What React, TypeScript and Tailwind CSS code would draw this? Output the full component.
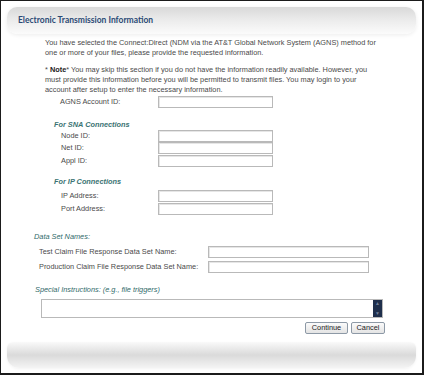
import React from "react";

const body = "font-['Liberation_Sans',Arial,sans-serif] text-[7.35px] text-[#4a4a4a]";

function Input({ w = "w-[115px]" }: { w?: string }) {
  return (
    <div
      className={`${w} h-[12px] bg-white border border-[#b9b9b9] shadow-[inset_1px_1px_0_#e6e6e6]`}
    />
  );
}

function Row({ label, labelMl, inputLeft, w }: { label: string; labelMl: string; inputLeft: string; w?: string }) {
  return (
    <div className="flex items-center h-[12.5px]">
      <div className={`${labelMl} ${inputLeft} shrink-0 leading-[12px]`}>{label}</div>
      <Input w={w} />
    </div>
  );
}

export default function App() {
  return (
    <div
      className={`w-[424px] h-[375px] bg-white border-l border-t border-r-2 border-b-2 border-[#1b1b1b] flex flex-col ${body}`}
    >
      {/* header */}
      <div className="mt-[6px] mx-[6px] h-[27px] rounded-[10px] bg-gradient-to-b from-[#d9d9d9] via-[#ececec] to-[#fbfbfb] shadow-[0_1px_4px_rgba(0,0,0,0.08)] flex items-center pl-[11px]">
        <span className="font-['Lato',sans-serif] font-bold text-[8.5px] text-[#2b4a75]">
          Electronic Transmission Information
        </span>
      </div>

      <div className="ml-[44px] mt-[4px] leading-[10px]">
        <div className="whitespace-nowrap">
          You have selected the Connect:Direct (NDM via the AT&amp;T Global Network System (AGNS) method for
        </div>
        <div className="whitespace-nowrap">one or more of your files, please provide the requested information.</div>
      </div>

      <div className="ml-[44px] mt-[7px] leading-[10px]">
        <div className="whitespace-nowrap">
          * <span className="font-bold text-[#222]">Note</span>* You may skip this section if you do not have the
          information readily available. However, you
        </div>
        <div className="whitespace-nowrap">
          must provide this information before you will be permitted to transmit files. You may login to your
        </div>
        <div className="whitespace-nowrap">account after setup to enter the necessary information.</div>
      </div>

      <div className="mt-[1px]">
        <Row label="AGNS Account ID:" labelMl="ml-[59px]" inputLeft="w-[98px]" />
      </div>

      <div className="ml-[53px] mt-[11px] leading-[10px] italic font-bold text-[#3b7373]">For SNA Connections</div>
      <div className="flex flex-col">
        <Row label="Node ID:" labelMl="ml-[60px]" inputLeft="w-[97px]" />
        <Row label="Net ID:" labelMl="ml-[60px]" inputLeft="w-[97px]" />
        <Row label="Appl ID:" labelMl="ml-[60px]" inputLeft="w-[97px]" />
      </div>

      <div className="ml-[53px] mt-[10px] leading-[10px] italic font-bold text-[#3b7373]">For IP Connections</div>
      <div className="flex flex-col mt-[3px]">
        <Row label="IP Address:" labelMl="ml-[60px]" inputLeft="w-[97px]" />
        <Row label="Port Address:" labelMl="ml-[60px]" inputLeft="w-[97px]" />
      </div>

      <div className="ml-[33px] mt-[17px] leading-[10px] italic text-[#2f6a6a]">Data Set Names:</div>
      <div className="flex flex-col mt-[4px] gap-[2px]">
        <Row
          label="Test Claim File Response Data Set Name:"
          labelMl="ml-[38px]"
          inputLeft="w-[169px]"
          w="w-[161px]"
        />
        <Row
          label="Production Claim File Response Data Set Name:"
          labelMl="ml-[38px]"
          inputLeft="w-[169px]"
          w="w-[161px]"
        />
      </div>

      <div className="ml-[34px] mt-[12px] leading-[10px] italic text-[#2f6a6a]">
        Special Instructions: (e.g., file triggers)
      </div>
      <div className="ml-[40px] mt-[4px] w-[342px] h-[19px] border border-[#b9b9b9] bg-white flex justify-end">
        <div className="w-[9px] h-full bg-[#1f2f4c] flex flex-col items-center justify-between py-[1px]">
          <span className="text-[5px] leading-[5px] text-[#6f7e98]">▲</span>
          <span className="text-[5px] leading-[5px] text-[#6f7e98]">▼</span>
        </div>
      </div>

      <div className="ml-[304px] mt-[4px] flex gap-[3px]">
        <button className="w-[43px] h-[12px] border border-[#8d99a6] rounded-[2px] bg-gradient-to-b from-[#fbfbfb] to-[#e4e4e4] text-[7.35px] leading-[10px] text-[#222] font-['Liberation_Sans',Arial,sans-serif]">
          Continue
        </button>
        <button className="w-[34px] h-[12px] border border-[#8d99a6] rounded-[2px] bg-gradient-to-b from-[#fbfbfb] to-[#e4e4e4] text-[7.35px] leading-[10px] text-[#222] font-['Liberation_Sans',Arial,sans-serif]">
          Cancel
        </button>
      </div>

      {/* footer */}
      <div className="mt-[8px] mx-[6px] h-[26px] rounded-b-[12px] rounded-t-[6px] bg-gradient-to-b from-[#fafafa] via-[#dadada] to-[#f4f4f4] shadow-[0_1px_3px_rgba(0,0,0,0.05)]" />
    </div>
  );
}
